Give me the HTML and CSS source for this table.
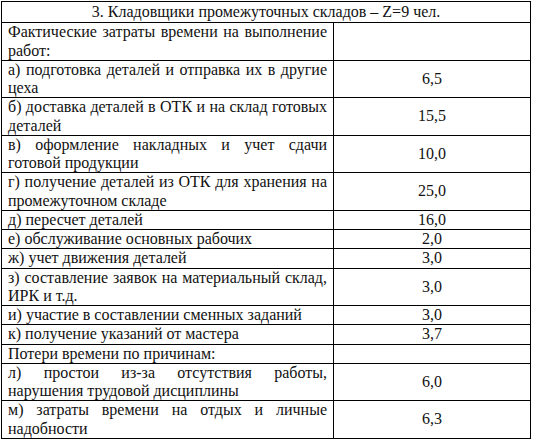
FILE: index.html
```html
<!DOCTYPE html>
<html lang="ru">
<head>
<meta charset="utf-8">
<link rel="stylesheet" href="styles.css">
</head>
<body>
<table class="sheet">
  <colgroup><col class="col-label"><col class="col-value"></colgroup>
  <tr><td class="title" colspan="2">3. Кладовщики промежуточных складов – Z=9 чел.</td></tr>
  <tr><td class="label">Фактические затраты времени на выполнение работ:</td><td class="value"></td></tr>
  <tr><td class="label">а) подготовка деталей и отправка их в другие цеха</td><td class="value">6,5</td></tr>
  <tr><td class="label">б) доставка деталей в ОТК и на склад готовых деталей</td><td class="value">15,5</td></tr>
  <tr><td class="label">в) оформление накладных и учет сдачи готовой продукции</td><td class="value">10,0</td></tr>
  <tr><td class="label">г) получение деталей из ОТК для хранения на промежуточном складе</td><td class="value">25,0</td></tr>
  <tr><td class="label">д) пересчет деталей</td><td class="value">16,0</td></tr>
  <tr><td class="label">е) обслуживание основных рабочих</td><td class="value">2,0</td></tr>
  <tr><td class="label">ж) учет движения деталей</td><td class="value">3,0</td></tr>
  <tr><td class="label">з) составление заявок на материальный склад, ИРК и т.д.</td><td class="value">3,0</td></tr>
  <tr><td class="label">и) участие в составлении сменных заданий</td><td class="value">3,0</td></tr>
  <tr><td class="label">к) получение указаний от мастера</td><td class="value">3,7</td></tr>
  <tr><td class="label">Потери времени по причинам:</td><td class="value"></td></tr>
  <tr><td class="label">л) простои из-за отсутствия работы, нарушения трудовой дисциплины</td><td class="value">6,0</td></tr>
  <tr><td class="label">м) затраты времени на отдых и личные надобности</td><td class="value">6,3</td></tr>
</table>
</body>
</html>
```
FILE: styles.css
```css
html, body {
  margin: 0;
  padding: 0;
  background: #fff;
}
body {
  padding: 1px 0 0 1px;
  font-family: "Liberation Serif", "Times New Roman", serif;
  font-size: 16px;
  color: #111;
}
.sheet {
  border-collapse: collapse;
  width: 529px;
  table-layout: fixed;
}
.col-label {
  width: 332px;
}
.col-value {
  width: 197px;
}
.sheet td {
  border: 1px solid #000;
  line-height: 18.25px;
  padding: 0 6px;
}
.sheet .title {
  text-align: center;
  padding: 1px 6px;
}
.sheet .label {
  text-align: justify;
  vertical-align: top;
}
.sheet .value {
  text-align: center;
  vertical-align: middle;
}
```
